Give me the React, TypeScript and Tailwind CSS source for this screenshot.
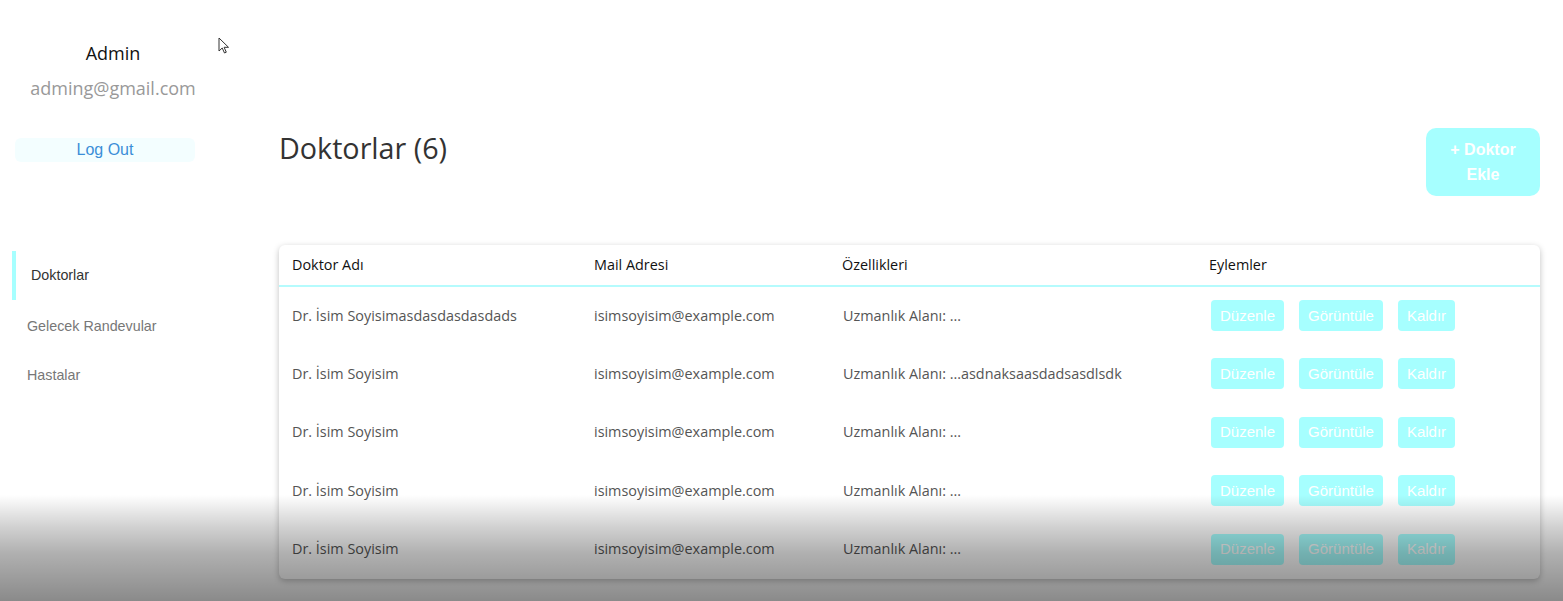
import React from 'react';

interface Doctor {
  name: string;
  email: string;
  spec: string;
}

const doctors: Doctor[] = [
  { name: 'Dr. İsim Soyisimasdasdasdasdads', email: 'isimsoyisim@example.com', spec: 'Uzmanlık Alanı: ...' },
  { name: 'Dr. İsim Soyisim', email: 'isimsoyisim@example.com', spec: 'Uzmanlık Alanı: ...asdnaksaasdadsasdlsdk' },
  { name: 'Dr. İsim Soyisim', email: 'isimsoyisim@example.com', spec: 'Uzmanlık Alanı: ...' },
  { name: 'Dr. İsim Soyisim', email: 'isimsoyisim@example.com', spec: 'Uzmanlık Alanı: ...' },
  { name: 'Dr. İsim Soyisim', email: 'isimsoyisim@example.com', spec: 'Uzmanlık Alanı: ...' },
];

const openSans = "font-['Open_Sans',sans-serif]";
const arial = "font-['Liberation_Sans',Arial,sans-serif]";

const Sidebar: React.FC = () => {
  return (
    <aside className="w-[279px] shrink-0">
      <div className={`w-[226px] pt-[41px] text-center ${openSans}`}>
        <div className="text-[18px] leading-[24px] text-[#111]">Admin</div>
        <div className="mt-[11px] text-[18px] leading-[24px] text-[#999]">adming@gmail.com</div>
      </div>
      <button
        className={`ml-[15px] mt-[38px] h-[24px] w-[180px] rounded-md bg-[#f3feff] text-[16px] text-[#3b8ed8] ${arial}`}
      >
        Log Out
      </button>
      <nav className={`mt-[89px] text-[14.3px] ${arial}`}>
        <div className="ml-[12px] flex h-[49px] items-center border-l-4 border-[#a6ffff] pl-[15px] text-[#333]">
          Doktorlar
        </div>
        <div className="flex h-[51px] items-center pl-[27px] pt-[2px] text-[#777]">Gelecek Randevular</div>
        <div className="flex h-[50px] items-center pl-[27px] text-[#777]">Hastalar</div>
      </nav>
    </aside>
  );
};

const ActionButton: React.FC<{ label: string }> = ({ label }) => (
  <button className={`h-[31px] rounded-[4px] bg-[#a6ffff] px-[9px] text-[15px] text-white ${arial}`}>
    {label}
  </button>
);

const DoctorTable: React.FC = () => {
  return (
    <div className="mt-[49px] overflow-hidden rounded-md bg-white shadow-[0_2px_6px_rgba(0,0,0,0.25)]">
      <table className={`w-full table-fixed border-collapse text-left text-[14.4px] ${openSans}`}>
        <colgroup>
          <col className="w-[301px]" />
          <col className="w-[249px]" />
          <col className="w-[367px]" />
          <col className="w-[344px]" />
        </colgroup>
        <thead>
          <tr className="h-[41px] text-[#111]">
            <th className="border-b-2 border-[#b5fbfd] pl-[13px] font-normal">Doktor Adı</th>
            <th className="border-b-2 border-[#b5fbfd] pl-[14px] font-normal">Mail Adresi</th>
            <th className="border-b-2 border-l-2 border-[#b5fbfd] border-l-white pl-[12px] font-normal">Özellikleri</th>
            <th className="border-b-2 border-l-2 border-[#b5fbfd] border-l-white pl-[12px] font-normal">Eylemler</th>
          </tr>
        </thead>
        <tbody>
          {doctors.map((d, i) => (
            <tr key={i} className="h-[58.5px] text-[#555]">
              <td className="pl-[13px]">{d.name}</td>
              <td className="pl-[14px]">{d.email}</td>
              <td className="pl-[14px]">{d.spec}</td>
              <td className="pl-[15px]">
                <div className="flex gap-[15px]">
                  <ActionButton label="Düzenle" />
                  <ActionButton label="Görüntüle" />
                  <ActionButton label="Kaldır" />
                </div>
              </td>
            </tr>
          ))}
        </tbody>
      </table>
    </div>
  );
};

const App: React.FC = () => {
  return (
    <div className="relative flex h-[601px] w-full overflow-hidden bg-white">
      <Sidebar />
      <main className="flex-1 pr-[23px] pt-[128px]">
        <div className="flex items-start justify-between">
          <h1 className={`text-[28.7px] font-normal leading-[40px] text-[#333] ${openSans}`}>Doktorlar (6)</h1>
          <button
            className={`w-[114px] rounded-[10px] bg-[#a6ffff] py-[9px] text-[16px] font-bold leading-[25px] text-white ${arial}`}
          >
            + Doktor
            <br />
            Ekle
          </button>
        </div>
        <DoctorTable />
      </main>

      {/* cursor */}
      <svg className="absolute left-[218px] top-[37px]" width="12" height="17" viewBox="0 0 12 17">
        <path d="M1 1 L1 14 L4.2 11 L6.5 16 L8.3 15.2 L6.1 10.3 L10.5 10.3 Z" fill="white" stroke="#333" strokeWidth="1" />
      </svg>

      {/* bottom fade overlay */}
      <div className="pointer-events-none absolute bottom-0 left-0 h-[106px] w-full bg-[linear-gradient(to_bottom,rgba(0,0,0,0)_0%,rgba(0,0,0,0.18)_30%,rgba(0,0,0,0.31)_55%,rgba(0,0,0,0.46)_100%)]" />
    </div>
  );
};

export default App;
